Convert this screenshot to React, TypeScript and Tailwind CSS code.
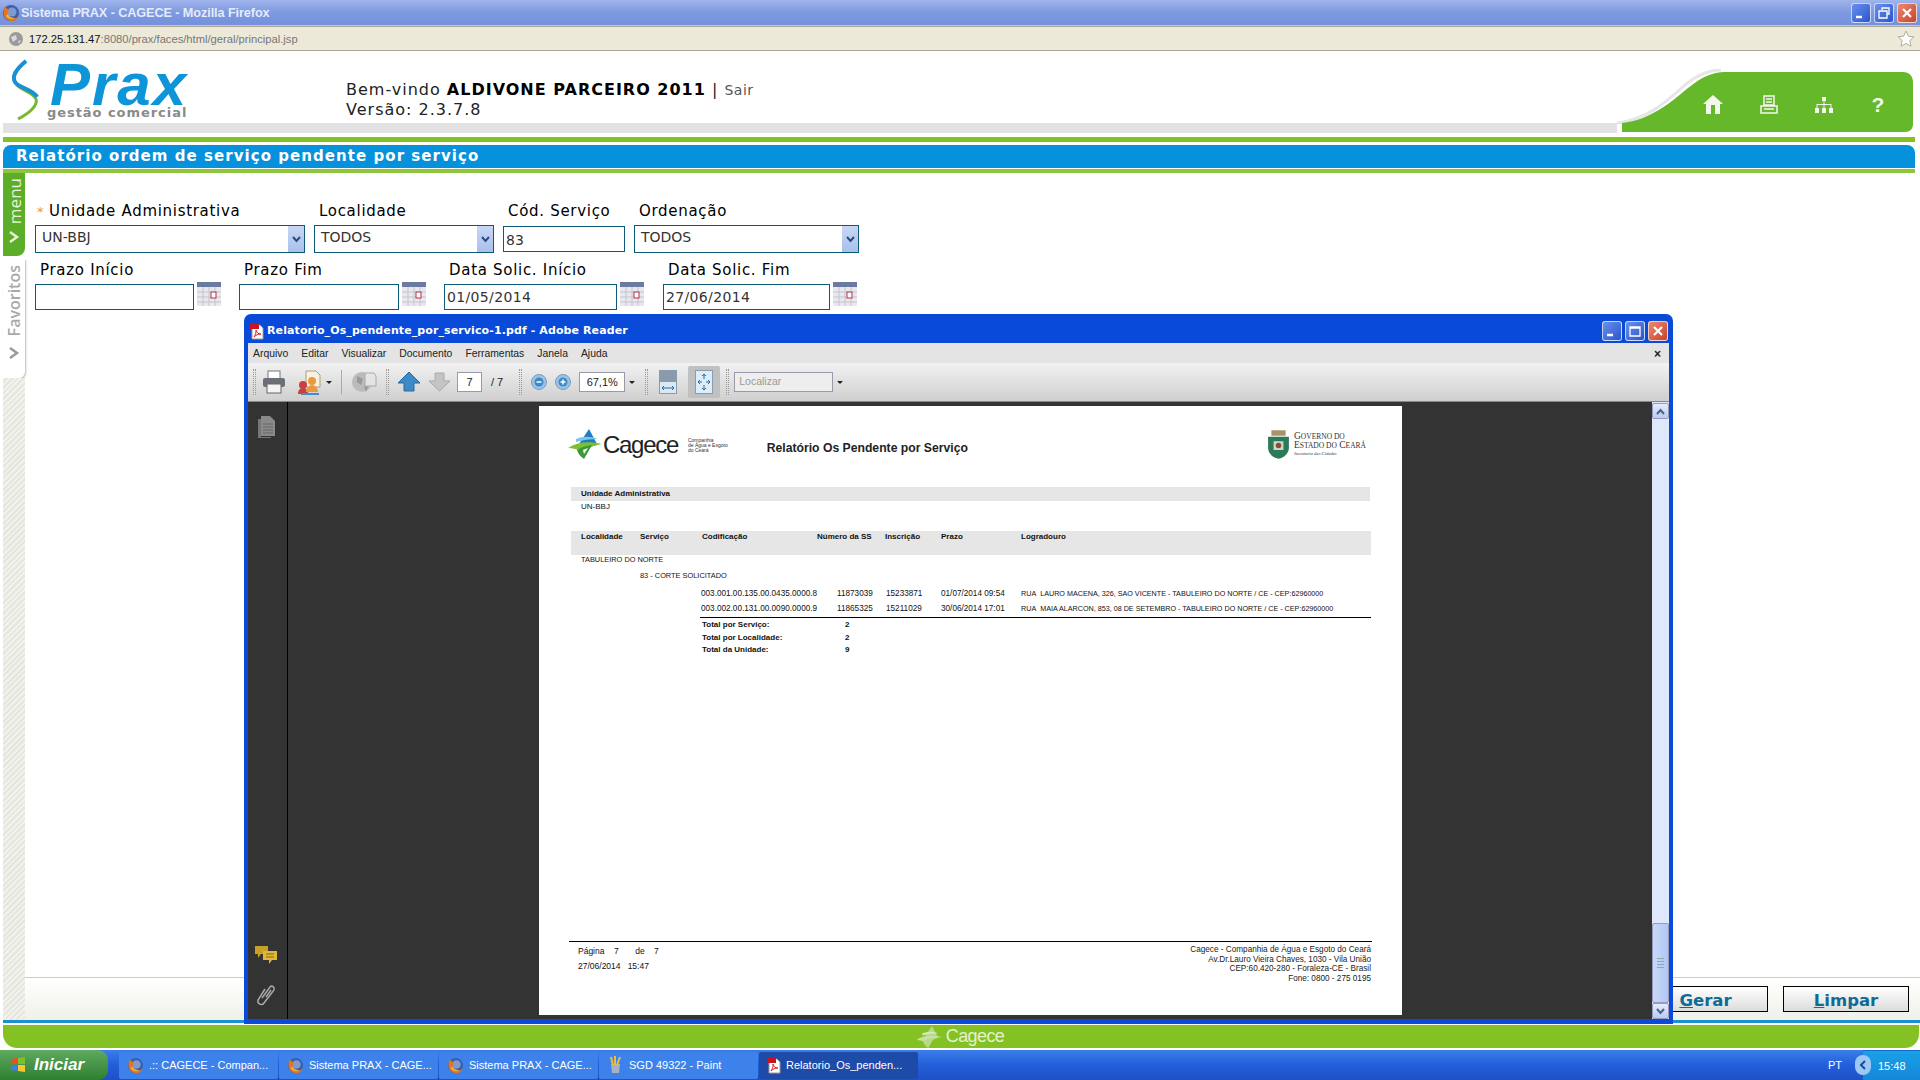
const dejavu = "font-['DejaVu_Sans',sans-serif]";

function FoxIcon({ size = 18 }: { size?: number }) {
  return (
    <svg width={size} height={size} viewBox="0 0 18 18" className="shrink-0">
      <circle cx="9" cy="9" r="8" fill="#3b5fa8" />
      <circle cx="10" cy="8" r="4.5" fill="#7f9ad0" />
      <path d="M3 2c-1 3-2 6-1 9 1 4 5 6 8 6 4 0 6-3 7-6-1 2-3 4-6 3-3 0-5-2-5-5 0-2 1-3 2-4-2 0-4 0-5-3z" fill="#e8761c" />
      <path d="M4 12c2 3 6 4 9 2-3 0-6-1-7-4z" fill="#f8b52c" />
    </svg>
  );
}

function PdfIcon() {
  return (
    <svg width="14" height="17" viewBox="0 0 14 17" className="shrink-0">
      <path d="M2 2h8l3 3v11H2z" fill="#fff" stroke="#999" />
      <path d="M0 1h9v5H0z" fill="#c8141e" />
      <path d="M4 14c2-3 2-5 2-7 1 3 2 4 5 4-3 0-5 1-7 3z" fill="none" stroke="#d22" />
    </svg>
  );
}

function WinButton({ kind, red }: { kind: "min" | "max" | "restore" | "close"; red?: boolean }) {
  return (
    <div className={`flex items-center justify-center w-[20px] h-[20px] rounded-[3px] border border-white/70 ${red ? "bg-gradient-to-br from-[#e88a70] to-[#c8402a]" : "bg-gradient-to-br from-[#6a90ec] to-[#2a55cc]"}`}>
      <svg width="14" height="14" viewBox="0 0 14 14" fill="none" stroke="#fff">
        {kind === "min" && <path d="M2 11h6" strokeWidth="2.5" />}
        {kind === "max" && <path d="M2 3h10v9H2zM2 4h10" strokeWidth="1.3" />}
        {kind === "restore" && <path d="M5 4V2h7v6h-2M2 5h8v7H2z" strokeWidth="1.3" />}
        {kind === "close" && <path d="M3 3l8 8M11 3l-8 8" strokeWidth="2.2" />}
      </svg>
    </div>
  );
}

function CalendarIcon() {
  return (
    <svg width="24" height="24" viewBox="0 0 24 24" className="shrink-0 -mt-[2px]">
      <rect x="0" y="0" width="24" height="24" fill="#e8e8ee" />
      <rect x="0" y="0" width="24" height="5" fill="#6b7aa0" />
      <path d="M0 10h24M0 15h24M0 20h24M6 5v19M12 5v19M18 5v19" stroke="#c4c4cc" />
      <rect x="14" y="10" width="5" height="6" fill="#fff" stroke="#b03050" />
    </svg>
  );
}

function Label({ text, star, pad }: { text: string; star?: boolean; pad: string }) {
  return (
    <div className={`${pad} h-[21px] flex items-center text-[15px] tracking-[0.7px] text-black whitespace-nowrap`}>
      {star && <span className="text-[#e8a020] text-[13px] mr-[6px] -ml-[12px] w-[6px]">*</span>}
      {text}
    </div>
  );
}

function SelectBox({ value, width, label, star, pad }: { value: string; width: string; label: string; star?: boolean; pad: string }) {
  return (
    <div className={width}>
      <Label text={label} star={star} pad={pad} />
      <div className="h-[28px] border border-[#0d5a78] bg-white flex items-center justify-between mt-[3px]">
        <span className="pl-[6px] text-[14px] text-[#333] pb-[3px]">{value}</span>
        <div className="w-[16px] h-[26px] bg-gradient-to-b from-[#c8d8f4] to-[#a8c0ec] flex items-center justify-center">
          <svg width="9" height="7" viewBox="0 0 9 7" fill="none" stroke="#2a4a88" strokeWidth="2">
            <path d="M1 1l3.5 4L8 1" />
          </svg>
        </div>
      </div>
    </div>
  );
}

function DateField({ label, value, group, input }: { label: string; value?: string; group: string; input: string }) {
  return (
    <div className={group}>
      <Label text={label} pad="pl-[5px]" />
      <div className="flex gap-[3px] mt-[3px]">
        <div className={`${input} h-[26px] border border-[#0d5a78] bg-white pl-[2px] text-[14px] leading-[24px] text-[#333] tracking-[0.35px]`}>{value}</div>
        <CalendarIcon />
      </div>
    </div>
  );
}

function TaskItem({ text, active, icon }: { text: string; active?: boolean; icon: React.ReactNode }) {
  return (
    <div className={`w-[159px] h-[27px] rounded-[2px] flex items-center gap-[5px] pl-[8px] text-white text-[11px] whitespace-nowrap ${active ? "bg-[#1e4aa8]" : "bg-[#3d82ea]"}`}>
      {icon}
      <span>{text}</span>
    </div>
  );
}

function CagecMark({ w, h, muted }: { w: number; h: number; muted?: boolean }) {
  return (
    <svg width={w} height={h} viewBox="0 0 34 30" className="shrink-0">
      <path d="M21 0l8 15H11z" fill={muted ? "#b8d88a" : "#1c7cc4"} />
      <path d="M8 10c7-3 14-3 22 0-8 0-15 1-22 3z" fill={muted ? "#d8e8c0" : "#7cc4e8"} />
      <path d="M0 19c9-6 20-7 34-4-10 2-16 5-20 8-5-3-9-4-14-4z" fill={muted ? "#c8e0a0" : "#7cc030"} />
      <path d="M9 21c4-3 9-4 15-5l-8 14c-3-2-6-5-7-9z" fill={muted ? "#b8d88a" : "#3c9a3a"} />
      <path d="M15 21l5-2-4 6z" fill="#fff" opacity={muted ? 0 : 1} />
    </svg>
  );
}

function ToolbarGrip() {
  return <div className="w-[3px] h-[26px] border-x border-dotted border-[#999]" />;
}

function Caret() {
  return <div className="w-0 h-0 border-x-[3px] border-x-transparent border-t-[3px] border-t-[#222]" />;
}

function ReaderToolbar() {
  return (
    <div className="h-[39px] bg-gradient-to-b from-[#f2f2f2] to-[#cfcfcf] border-b border-[#888] flex items-center pl-[5px] shrink-0 text-[11px] text-[#222]">
      <ToolbarGrip />
      <svg width="24" height="24" viewBox="0 0 24 24" className="ml-[6px]">
        <rect x="6" y="1" width="12" height="8" fill="#fff" stroke="#777" />
        <rect x="1" y="8" width="22" height="9" rx="2" fill="#6c7076" />
        <rect x="5" y="14" width="14" height="9" fill="#f4f4f4" stroke="#666" />
      </svg>
      <svg width="26" height="25" viewBox="0 0 26 25" className="ml-[11px]">
        <path d="M9 1h10l4 4v12H9z" fill="#f8f0e0" stroke="#b89a70" />
        <circle cx="6" cy="15" r="4" fill="#c84040" />
        <path d="M1 24c0-4 2-6 5-6s5 2 5 6z" fill="#c84040" />
        <circle cx="15" cy="11" r="4" fill="#e89a40" />
        <path d="M9 22c0-4 3-7 6-7s6 3 6 7z" fill="#e89a40" />
        <path d="M4 23h18v2H4z" fill="#4a8ac8" />
      </svg>
      <div className="ml-[3px]"><Caret /></div>
      <div className="w-px h-[24px] bg-[#aaa] ml-[9px]" />
      <svg width="25" height="24" viewBox="0 0 25 24" className="ml-[10px]">
        <circle cx="10" cy="12" r="10" fill="#bbb" />
        <path d="M5 6l6 3-2 6-4-3zM12 16l4 1-2 5z" fill="#999" />
        <path d="M13 3h9l2 3v10H13z" fill="#e4e4e4" stroke="#aaa" />
      </svg>
      <div className="ml-[9px]"><ToolbarGrip /></div>
      <svg width="22" height="20" viewBox="0 0 22 20" className="ml-[9px]">
        <path d="M11 0l11 11h-6v8H6v-8H0z" fill="#3c8ac8" stroke="#2a6a9c" />
      </svg>
      <svg width="21" height="20" viewBox="0 0 21 20" className="ml-[9px]">
        <path d="M6 1h9v8h6L10.5 19 0 9h6z" fill="#c4c4c4" stroke="#aaa" />
      </svg>
      <div className="ml-[7px] w-[25px] h-[20px] border border-[#99a] bg-white flex items-center justify-center text-[11px]">7</div>
      <span className="ml-[9px]">/ 7</span>
      <div className="ml-[16px]"><ToolbarGrip /></div>
      <svg width="16" height="16" viewBox="0 0 16 16" className="ml-[9px]">
        <circle cx="8" cy="8" r="7.5" fill="#9cc2e4" stroke="#7a9cbc" />
        <circle cx="8" cy="8" r="4.5" fill="#3c8ac8" />
        <path d="M5.5 8h5" stroke="#fff" strokeWidth="1.5" />
      </svg>
      <svg width="16" height="16" viewBox="0 0 16 16" className="ml-[8px]">
        <circle cx="8" cy="8" r="7.5" fill="#9cc2e4" stroke="#7a9cbc" />
        <circle cx="8" cy="8" r="4.5" fill="#3c8ac8" />
        <path d="M5.5 8h5M8 5.5v5" stroke="#fff" strokeWidth="1.5" />
      </svg>
      <div className="ml-[8px] w-[46px] h-[20px] border border-[#99a] bg-white flex items-center justify-center text-[11px]">67,1%</div>
      <div className="ml-[4px]"><Caret /></div>
      <div className="ml-[10px]"><ToolbarGrip /></div>
      <svg width="18" height="24" viewBox="0 0 18 24" className="ml-[11px]">
        <rect x="0.5" y="0.5" width="17" height="23" fill="#dbe8f4" stroke="#8a9cb0" />
        <rect x="1" y="1" width="16" height="11" fill="#8a9aac" />
        <path d="M3 18h12M3 18l2-2M3 18l2 2M15 18l-2-2M15 18l-2 2" stroke="#2a6a9c" fill="none" />
      </svg>
      <div className="ml-[11px] w-[32px] h-[32px] rounded-[2px] bg-[#c0c0c0] flex items-center justify-center">
        <svg width="18" height="24" viewBox="0 0 18 24">
          <rect x="0.5" y="0.5" width="17" height="23" fill="#dcecf8" stroke="#8a9cb0" />
          <path d="M9 4v5M9 15v5M3 12h4M11 12h4M9 4l-2 2M9 4l2 2M9 20l-2-2M9 20l2-2M3 12l2-2M3 12l2 2M15 12l-2-2M15 12l-2 2" stroke="#2a6a9c" fill="none" />
        </svg>
      </div>
      <div className="ml-[6px]"><ToolbarGrip /></div>
      <div className="ml-[5px] w-[99px] h-[20px] border border-[#99a] bg-[#eee] flex items-center pl-[4px] text-[10.5px] text-[#999]">Localizar</div>
      <div className="ml-[4px]"><Caret /></div>
    </div>
  );
}

const reportCols = "grid grid-cols-[59px_62px_115px_68px_56px_80px_1fr]";
const dataCols = "grid grid-cols-[136px_49px_55px_80px_1fr]";

function PdfPage() {
  return (
    <div className="w-[863px] h-[609px] bg-white font-['Liberation_Sans',sans-serif] text-[8.2px] text-[#111] flex flex-col shrink-0">
      {/* cabeçalho do relatório */}
      <div className="h-[32px] mt-[22px] ml-[29px] mr-[36px] flex items-center shrink-0">
        <CagecMark w={34} h={30} />
        <span className="ml-[1px] text-[24px] tracking-[-1.3px] text-[#222] relative top-[1px]">Cagece</span>
        <div className="ml-[10px] text-[5px] leading-[5px] text-[#333] whitespace-nowrap relative top-[1px]">Companhia<br />de Água e Esgoto<br />do Ceará</div>
        <span className="ml-[39px] text-[12.2px] font-bold text-[#222] whitespace-nowrap relative top-[4px]">Relatório Os Pendente por Serviço</span>
        <div className="ml-auto flex items-center gap-[4px]">
          <svg width="23" height="29" viewBox="0 0 21 26">
            <path d="M4 0h13v5H4z" fill="#a89468" />
            <path d="M1 6h19v10c0 5-4 9-9.500 10C5 25 1 21 1 16z" fill="#2c7a58" />
            <path d="M6 10h9v8H6z" fill="#c8d8c8" />
            <circle cx="10.500" cy="14" r="2.500" fill="#8a4a3a" />
          </svg>
          <div className="font-['Liberation_Serif',serif] text-[#333] leading-[9px] whitespace-nowrap">
            <div className="text-[9.5px]">G<span className="text-[7.5px]">OVERNO DO</span></div>
            <div className="text-[9.5px]">E<span className="text-[7.5px]">STADO DO</span> C<span className="text-[7.5px]">EARÁ</span></div>
            <div className="text-[4.6px] leading-[7px] italic">Secretaria das Cidades</div>
          </div>
        </div>
      </div>

      <div className="h-[14px] mt-[27px] ml-[32px] w-[799px] bg-[#e6e6e6] pl-[10px] font-bold text-[8px] leading-[14px] shrink-0">Unidade Administrativa</div>
      <div className="ml-[42px] h-[14px] leading-[12px] text-[8px] shrink-0">UN-BBJ</div>

      <div className={`${reportCols} h-[24px] mt-[16px] ml-[32px] w-[800px] bg-[#e6e6e6] pl-[10px] font-bold text-[8px] leading-[12px] shrink-0`}>
        <span>Localidade</span>
        <span>Serviço</span>
        <span>Codificação</span>
        <span>Número da SS</span>
        <span>Inscrição</span>
        <span>Prazo</span>
        <span>Logradouro</span>
      </div>
      <div className="ml-[42px] mt-[-2px] h-[16px] leading-[10px] pt-[2px] text-[7.4px] shrink-0">TABULEIRO DO NORTE</div>
      <div className="ml-[101px] h-[14px] leading-[14px] text-[7.4px] shrink-0">83 - CORTE SOLICITADO</div>

      <div className={`${dataCols} ml-[32px] w-[800px] pl-[130px] mt-[4px] h-[15px] leading-[14px] shrink-0`}>
        <span>003.001.00.135.00.0435.0000.8</span>
        <span>11873039</span>
        <span>15233871</span>
        <span>01/07/2014 09:54</span>
        <span className="text-[7.2px] whitespace-nowrap">RUA&nbsp; LAURO MACENA, 326, SAO VICENTE - TABULEIRO DO NORTE / CE - CEP:62960000</span>
      </div>
      <div className={`${dataCols} ml-[32px] w-[800px] pl-[130px] h-[15px] leading-[14px] shrink-0`}>
        <span>003.002.00.131.00.0090.0000.9</span>
        <span>11865325</span>
        <span>15211029</span>
        <span>30/06/2014 17:01</span>
        <span className="text-[7.2px] whitespace-nowrap">RUA&nbsp; MAIA ALARCON, 853, 08 DE SETEMBRO - TABULEIRO DO NORTE / CE - CEP:62960000</span>
      </div>
      <div className="ml-[161px] w-[671px] h-px bg-black shrink-0" />
      <div className="ml-[163px] mt-[1px] font-bold text-[8px] leading-[12.500px] shrink-0">
        <div className="grid grid-cols-[143px_1fr]"><span>Total por Serviço:</span><span>2</span></div>
        <div className="grid grid-cols-[143px_1fr]"><span>Total por Localidade:</span><span>2</span></div>
        <div className="grid grid-cols-[143px_1fr]"><span>Total da Unidade:</span><span>9</span></div>
      </div>

      {/* rodapé do relatório */}
      <div className="mt-auto mb-[32px] ml-[30px] mr-[30px] border-t border-black flex justify-between pt-[3px]">
        <div className="pl-[9px] text-[8.5px]">
          <div className="leading-[12px]">Página&nbsp;&nbsp;&nbsp; 7&nbsp;&nbsp;&nbsp;&nbsp;&nbsp;&nbsp; de&nbsp;&nbsp;&nbsp; 7</div>
          <div className="leading-[12px] mt-[3px]">27/06/2014&nbsp;&nbsp; 15:47</div>
        </div>
        <div className="text-right leading-[9.500px] text-[#222] pr-px">
          <div>Cagece - Companhia de Água e Esgoto do Ceará</div>
          <div>Av.Dr.Lauro Vieira Chaves, 1030 - Vila União</div>
          <div>CEP:60.420-280 - Foraleza-CE - Brasil</div>
          <div>Fone: 0800 - 275 0195</div>
        </div>
      </div>
    </div>
  );
}

function ReaderWindow() {
  return (
    <div className="absolute left-[244px] top-[314px] w-[1429px] h-[710px] rounded-t-[7px] bg-[#0a4ad8] px-[4px] pb-[5px] flex flex-col font-['Liberation_Sans',sans-serif]">
      <div className="h-[29px] flex items-center pt-[5px] pl-[2px] pr-[1px] shrink-0">
        <PdfIcon />
        <span className={`ml-[3px] text-[11px] font-bold text-white whitespace-nowrap ${dejavu} tracking-[0.1px]`}>Relatorio_Os_pendente_por_servico-1.pdf - Adobe Reader</span>
        <div className="ml-auto flex gap-[3px]">
          <WinButton kind="min" />
          <WinButton kind="max" />
          <WinButton kind="close" red />
        </div>
      </div>
      <div className="h-[20px] pt-px bg-[#e4e4e4] flex items-center pl-[5px] gap-[13px] text-[10.400px] text-[#222] shrink-0">
        <span>Arquivo</span>
        <span>Editar</span>
        <span>Visualizar</span>
        <span>Documento</span>
        <span>Ferramentas</span>
        <span>Janela</span>
        <span>Ajuda</span>
        <span className="ml-auto mr-[8px] font-bold text-[12px] leading-none">×</span>
      </div>
      <ReaderToolbar />
      <div className="flex-1 min-h-0 flex bg-[#333333]">
        <div className="w-[40px] border-r border-black flex flex-col items-center shrink-0 pt-[14px] pb-[12px] pr-[4px]">
          <svg width="18" height="22" viewBox="0 0 18 22">
            <path d="M1 3h3v18h10v1H1z" fill="#777" />
            <path d="M4 0h9l5 5v15H4z" fill="#8a8a8a" />
            <path d="M6 8h10M6 11h10M6 14h10M6 17h10" stroke="#666" />
          </svg>
          <svg width="24" height="20" viewBox="0 0 24 20" className="mt-auto">
            <path d="M1 1h13v8H7l-3 4V9H1z" fill="#c8a028" />
            <path d="M9 6h14v9h-5l-3 4v-4H9z" fill="#e0b838" />
            <path d="M12 9h8M12 12h8" stroke="#8a6a10" />
          </svg>
          <svg width="22" height="24" viewBox="0 0 22 24" className="mt-[18px]" fill="none" stroke="#aaa" strokeWidth="1.5">
            <path d="M7 15l8-11c2-2 5 0 4 3L9 20c-2 3-7 1-6-3l7-11" />
            <path d="M11 14l5-7" />
          </svg>
        </div>
        <div className="flex-1 min-w-0 flex items-start pt-[4px] pl-[251px]">
          <PdfPage />
        </div>
        <div className="w-[17px] bg-[#dfe8fa] flex flex-col shrink-0 pt-px">
          <div className="h-[16px] bg-gradient-to-b from-[#e4ecfc] to-[#b8ccf4] border border-[#99b] rounded-[2px] flex items-center justify-center">
            <svg width="9" height="7" viewBox="0 0 9 7" fill="none" stroke="#4d6185" strokeWidth="2"><path d="M1 6l3.500-4L8 6" /></svg>
          </div>
          <div className="mt-auto h-[80px] bg-gradient-to-r from-[#c8d8f8] to-[#b0c8f4] border border-[#99b] rounded-[2px] flex flex-col items-center justify-center gap-[2px]">
            <div className="w-[7px] h-px bg-[#8aa]" /><div className="w-[7px] h-px bg-[#8aa]" /><div className="w-[7px] h-px bg-[#8aa]" /><div className="w-[7px] h-px bg-[#8aa]" />
          </div>
          <div className="h-[16px] bg-gradient-to-b from-[#e4ecfc] to-[#b8ccf4] border border-[#99b] rounded-[2px] flex items-center justify-center">
            <svg width="9" height="7" viewBox="0 0 9 7" fill="none" stroke="#4d6185" strokeWidth="2"><path d="M1 1l3.500 4L8 1" /></svg>
          </div>
        </div>
      </div>
    </div>
  );
}

function HeaderTab() {
  return (
    <div className="relative w-[298px] h-[65px] shrink-0 self-end mb-[2px]">
      <svg width="298" height="65" viewBox="0 0 298 65" className="block">
        <path d="M0 54c30-3 50-22 68-38C80 6 92 1 104 1" fill="none" stroke="#e6e6e6" strokeWidth="3" />
        <path d="M5 54c28-3 48-20 66-35C85 8 95 3 108 3h178c6 0 10 4 10 10v42c0 5-3 8-8 8H5z" fill="#64b82a" />
      </svg>
      <div className="absolute left-[68px] top-[25px] flex items-center">
        <div className="w-[56px] flex justify-center">
          <svg width="20" height="19" viewBox="0 0 20 19" fill="#f4f8ec">
            <path d="M10 0l10 9h-3v10H3V9H0z" />
            <rect x="8" y="10" width="4" height="9" fill="#64b82a" />
          </svg>
        </div>
        <div className="w-[55px] flex justify-center">
          <svg width="18" height="19" viewBox="0 0 18 19" fill="none" stroke="#f4f8ec" strokeWidth="1.5">
            <path d="M4 1h10v9H4zM6 4h6M6 7h6M1 11h16v7H1zM4 14h10" />
          </svg>
        </div>
        <div className="w-[55px] flex justify-center">
          <svg width="18" height="16" viewBox="0 0 18 16" fill="#f4f8ec">
            <rect x="7" y="0" width="4" height="4" />
            <rect x="0" y="11" width="4" height="5" />
            <rect x="7" y="11" width="4" height="5" />
            <rect x="14" y="11" width="4" height="5" />
            <path d="M8.500 4h1v3h7v4h-1V8h-6v3h-1V8h-6v3h-1V7h7z" />
          </svg>
        </div>
        <div className="w-[54px] text-center text-[#f4f8ec] text-[21px] font-bold leading-none font-['Liberation_Sans',sans-serif]">?</div>
      </div>
    </div>
  );
}

export default function App() {
  return (
    <div className={`relative w-[1920px] h-[1080px] overflow-hidden bg-white flex flex-col ${dejavu}`}>
      {/* janela do Firefox */}
      <div className="h-[26px] bg-gradient-to-b from-[#a0b4ec] via-[#7d99df] to-[#7591dc] border-b border-[#b8c8ee] flex items-center pl-[2px] pr-[3px] shrink-0">
        <FoxIcon />
        <span className="ml-[1px] mt-[2px] text-[12.700px] font-bold text-[#e4ebfa] font-['Liberation_Sans',sans-serif] tracking-[-0.1px]">Sistema PRAX - CAGECE - Mozilla Firefox</span>
        <div className="ml-auto flex gap-[3px]">
          <WinButton kind="min" />
          <WinButton kind="restore" />
          <WinButton kind="close" red />
        </div>
      </div>
      <div className="h-[25px] bg-[#ece9d8] border-y border-[#aca899] flex items-center pl-[8px] pr-[5px] shrink-0 font-['Liberation_Sans',sans-serif] text-[11.200px]">
        <svg width="16" height="16" viewBox="0 0 16 16"><circle cx="8" cy="8" r="7" fill="#9a9a9a" /><path d="M3 6l5-2 1 4-4 3zM10 10l3-1-2 4z" fill="#d8d8d8" /></svg>
        <span className="ml-[5px] mt-[2px] text-[#111]">172.25.131.47</span>
        <span className="mt-[2px] text-[#777]">:8080/prax/faces/html/geral/principal.jsp</span>
        <svg width="18" height="17" viewBox="0 0 18 17" className="ml-auto" fill="#fff" stroke="#b0ad9e"><path d="M9 1l2.400 5.200 5.600.6-4.200 3.800 1.200 5.600L9 13.400l-5 2.800 1.200-5.600L1 6.800l5.600-.6z" /></svg>
      </div>

      {/* cabeçalho */}
      <div className="h-[85px] flex shrink-0 pl-[3px] pr-[5px]">
        <div className="flex-1 min-w-0 flex flex-col">
          <div className="h-[71px] flex">
            <div className="w-[340px] flex shrink-0">
              <svg width="34" height="62" viewBox="0 0 34 62" className="ml-[5px] mt-[8px] shrink-0" fill="none">
                <path d="M18 2C8 10 3 18 8 25c4 6 17 8 20 15 2 6-6 14-18 20" stroke="#7ab830" strokeWidth="3" />
                <path d="M18 2C6 12 2 20 10 26c6 4 16 6 19 12" stroke="#1a90d4" strokeWidth="4" />
              </svg>
              <div className="ml-[8px] flex flex-col">
                <span className="text-[#0e95d8] text-[60px] font-bold italic leading-[44px] mt-[12px] font-['Liberation_Sans',sans-serif] tracking-[2px]">Prax</span>
                <span className="text-[#8a8a8a] text-[13px] font-bold leading-[12px] tracking-[0.95px] -ml-[3px]">gestão comercial</span>
              </div>
            </div>
            <div className="pl-[3px] pt-[29px] text-[16px] leading-[20px] text-[#222] tracking-[1px] whitespace-nowrap">
              <div>Bem-vindo <b className="text-black">ALDIVONE PARCEIRO 2011</b> | <span className="text-[14px] text-[#555] tracking-[0.5px]">Sair</span></div>
              <div>Versão: 2.3.7.8</div>
            </div>
          </div>
          <div className="h-[10px] mt-[1px] bg-[#e2e2e2]" />
        </div>
        <HeaderTab />
      </div>

      <div className="h-[5px] mt-[1px] bg-[#84c224] mx-[3px] mr-[5px] shrink-0" />
      <div className="h-[23px] mt-[3px] ml-[3px] mr-[5px] bg-[#0691dd] rounded-t-[8px] pl-[13px] text-white font-bold text-[15px] leading-[22px] tracking-[1.05px] shrink-0">
        Relatório ordem de serviço pendente por serviço
      </div>
      <div className="h-[4px] mt-[1px] ml-[3px] mr-[5px] bg-[#8cc63f] shrink-0" />

      {/* área principal */}
      <div className="flex-1 min-h-0 flex">
        <div className="w-[25px] shrink-0 pl-[3px] flex flex-col">
          <div className="h-[83px] bg-[#5cae28] rounded-br-[8px] flex flex-col items-center text-[#e8f4d8] font-['Open_Sans',sans-serif]">
            <span className="[writing-mode:vertical-rl] rotate-180 text-[17px] leading-none mt-[5px]">menu</span>
            <svg width="12" height="14" viewBox="0 0 12 14" fill="none" stroke="#e8f4d8" strokeWidth="2.500" className="mt-[6px]"><path d="M2 2l7 5-7 5" /></svg>
          </div>
          <div className="h-[119px] mt-[3px] bg-white shadow-[1px_1px_2px_#bbb] rounded-br-[6px] flex flex-col items-center text-[#aaa] font-['Open_Sans',sans-serif]">
            <span className="[writing-mode:vertical-rl] rotate-180 text-[16px] font-semibold leading-none mt-[6px]">Favoritos</span>
            <svg width="12" height="14" viewBox="0 0 12 14" fill="none" stroke="#999" strokeWidth="2.500" className="mt-[10px]"><path d="M2 2l7 5-7 5" /></svg>
          </div>
          <div className="flex-1 bg-[repeating-linear-gradient(135deg,#f2f2ec,#f2f2ec_2px,#e6e6de_2px,#e6e6de_4px)]" />
          <div className="h-[3px] -mr-[4px] bg-[#1c8fce]" />
        </div>

        <div className="flex-1 min-w-0 flex flex-col">
          <div className="flex-1 min-h-0 pl-[10px] pt-[28px]">
            <div className="flex gap-[9px]">
              <SelectBox label="Unidade Administrativa" star pad="pl-[14px]" value="UN-BBJ" width="w-[270px]" />
              <SelectBox label="Localidade" pad="pl-[5px]" value="TODOS" width="w-[180px]" />
              <div className="w-[122px]">
                <Label text="Cód. Serviço" pad="pl-[5px]" />
                <div className="h-[26px] mt-[4px] border border-[#0d5a78] bg-white pl-[2px] text-[14px] leading-[26px] text-[#333]">83</div>
              </div>
              <SelectBox label="Ordenação" pad="pl-[5px]" value="TODOS" width="w-[225px]" />
            </div>
            <div className="flex mt-[7px]">
              <DateField label="Prazo Início" group="w-[204px]" input="w-[159px]" />
              <DateField label="Prazo Fim" group="w-[205px]" input="w-[160px]" />
              <DateField label="Data Solic. Início" value="01/05/2014" group="w-[219px]" input="w-[173px]" />
              <DateField label="Data Solic. Fim" value="27/06/2014" group="w-[200px]" input="w-[167px]" />
            </div>
          </div>
          <div className="h-[43px] border-t border-[#ccc] bg-gradient-to-b from-white to-[#f0f0ea] flex justify-end items-start gap-[15px] pt-[8px] pr-[11px] shrink-0">
            <div className="w-[125px] h-[26px] border border-black bg-gradient-to-b from-white to-[#dcdcdc] text-center text-[#0f6a96] font-bold text-[16.500px] leading-[28px]"><u>G</u>erar</div>
            <div className="w-[126px] h-[26px] border border-black bg-gradient-to-b from-white to-[#dcdcdc] text-center text-[#0f6a96] font-bold text-[16.500px] leading-[28px]"><u>L</u>impar</div>
          </div>
          <div className="h-[3px] -mr-[1px] bg-[#1c8fce] shrink-0" />
        </div>
      </div>

      {/* rodapé verde */}
      <div className="h-[23px] mt-[2px] ml-[3px] mr-px bg-[#84c224] rounded-b-[14px] flex items-center justify-center shrink-0 font-['Liberation_Sans',sans-serif]">
        <div className="flex items-center gap-[4px] pr-[2px]">
          <CagecMark w={26} h={22} muted />
          <span className="text-[18px] text-[#e4f0cc] tracking-[-0.6px]">Cagece</span>
        </div>
      </div>

      {/* barra de tarefas */}
      <div className="h-[30px] mt-[2px] bg-gradient-to-b from-[#3a7ee8] via-[#245edb] to-[#1f50c4] flex items-center shrink-0 font-['Liberation_Sans',sans-serif]">
        <div className="w-[108px] h-[30px] rounded-r-[10px] bg-gradient-to-b from-[#5eaa5e] to-[#2f7f31] flex items-center gap-[7px] pl-[9px] text-white font-bold italic text-[17px] shrink-0">
          <svg width="18" height="18" viewBox="0 0 18 18">
            <path d="M2 3l6-1v6H2z" fill="#e8502a" />
            <path d="M9 2l7-1v7H9z" fill="#7cc030" />
            <path d="M2 9h6v6l-6-1z" fill="#3a80e0" />
            <path d="M9 9h7v7l-7-1z" fill="#f8c830" />
          </svg>
          Iniciar
        </div>
        <div className="ml-[11px] flex gap-px">
          <TaskItem text=".:: CAGECE - Compan..." icon={<FoxIcon size={17} />} />
          <TaskItem text="Sistema PRAX - CAGE..." icon={<FoxIcon size={17} />} />
          <TaskItem text="Sistema PRAX - CAGE..." icon={<FoxIcon size={17} />} />
          <TaskItem
            text="SGD 49322 - Paint"
            icon={
              <svg width="17" height="18" viewBox="0 0 17 18" className="shrink-0">
                <path d="M4 8h9l-1 9H5z" fill="#a8b0c8" />
                <path d="M6 9L4 1M8 9V0M10 9l3-8" stroke="#e8c040" strokeWidth="2" />
              </svg>
            }
          />
          <TaskItem text="Relatorio_Os_penden..." active icon={<PdfIcon />} />
        </div>
        <div className="ml-auto flex items-center h-full text-white text-[11px]">
          <span className="mr-[13px]">PT</span>
          <div className="w-[16px] h-[20px] rounded-full bg-[#9cc8f4] flex items-center justify-center -mr-[8px] z-10">
            <svg width="8" height="10" viewBox="0 0 8 10" fill="none" stroke="#1a4aa8" strokeWidth="2"><path d="M6 1L2 5l4 4" /></svg>
          </div>
          <div className="w-[57px] h-full bg-gradient-to-b from-[#1aa0e8] to-[#1488d8] border-t border-[#0c70c8] pl-[15px] leading-[30px]">15:48</div>
        </div>
      </div>

      <ReaderWindow />
    </div>
  );
}
